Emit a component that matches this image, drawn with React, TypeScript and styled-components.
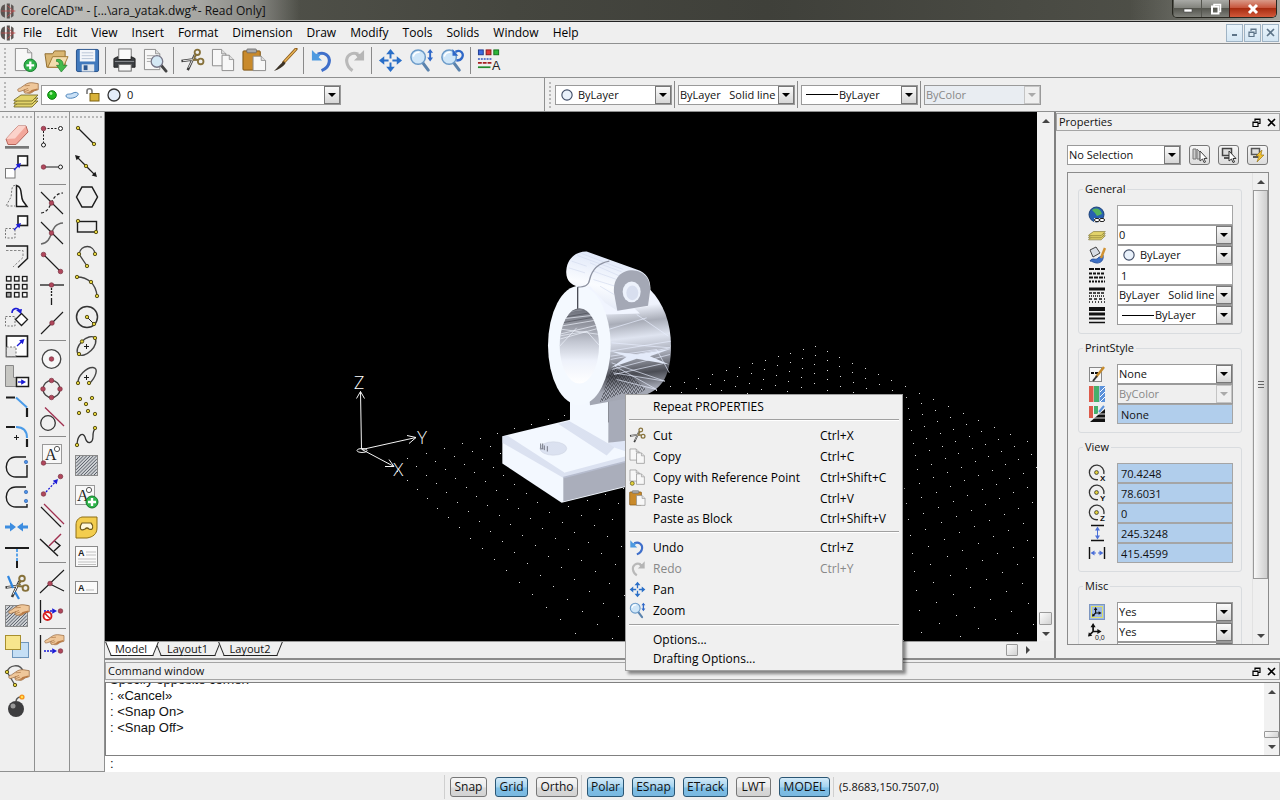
import React from "react";
import styled, { createGlobalStyle, css } from "styled-components";

const uiFont = `"Open Sans", "Noto Sans", sans-serif`;
const ink = "#111";
const face = "#efefef";
const edge = "#8f9090";

const Global = createGlobalStyle`
  *, *::before, *::after { box-sizing: border-box; }
  html, body { margin: 0; height: 100%; background: ${face}; }
  body { font: 11px/14px ${uiFont}; color: ${ink}; overflow: hidden; }
  button, select, input { font: inherit; color: inherit; margin: 0; padding: 0; }
`;

/* ---------- shell ---------- */
const Shell = styled.div`
  position: relative;
  display: flex;
  flex-direction: column;
  height: 100vh;
  min-height: 640px;
  background: ${face};
`;

const TitleBar = styled.header`
  display: flex;
  flex: none;
  align-items: center;
  gap: 5px;
  height: 22px;
  border-bottom: 1px solid #222;
  box-shadow: inset 0 -1px 0 #b8b8b4;
  background:
    linear-gradient(90deg, rgba(205, 205, 202, 0.95) 0, rgba(175, 175, 171, 0.9) 200px, rgba(150, 150, 146, 0.8) 255px, transparent 300px),
    linear-gradient(270deg, #a3a59e 0, #777871 60px, transparent 150px),
    linear-gradient(90deg, #5a5b53, #45463f 40%, #3f403a 60%, #53544c);
`;

const WindowTitle = styled.h1`
  flex: 1;
  margin: 0;
  font-size: 12px;
  line-height: 18px;
  font-weight: 400;
`;

const WindowButtons = styled.div`
  display: flex;
  align-self: flex-start;
  height: 18px;
  margin-right: 3px;
  border: 1px solid #26261f;
  border-top: 0;
  border-radius: 0 0 5px 5px;
  overflow: hidden;
`;

const WindowButton = styled.button<{ $close?: boolean }>`
  display: grid;
  place-items: center;
  width: ${(p) => (p.$close ? 47 : 28)}px;
  border: 0;
  border-left: 1px solid ${(p) => (p.$close ? "#4a1a14" : "#55564f")};
  background: ${(p) =>
    p.$close
      ? "linear-gradient(#d99a88, #c8563d 45%, #a82c10 50%, #d2593a)"
      : "linear-gradient(#a9aaa6, #83847e 45%, #55564f 50%, #7f807a)"};
`;

const MenuBar = styled.nav`
  display: flex;
  flex: none;
  align-items: center;
  height: 22px;
  border-bottom: 1px solid ${edge};
  background: ${face};
`;

const MenuLink = styled.a`
  padding: 0 7px;
  color: #000;
  font-size: 12px;
  line-height: 18px;
  text-decoration: none;
`;

const MdiButtons = styled.div`
  display: flex;
  gap: 1px;
  margin-left: auto;
  margin-right: 1px;
`;

const MdiButton = styled.button`
  display: grid;
  place-items: center;
  width: 17px;
  height: 18px;
  border: 1px solid #9fb3c4;
  background: linear-gradient(#eaf4fb, #d4e6f3);
`;

const Toolbar = styled.div`
  display: flex;
  flex: none;
  align-items: center;
  height: 34px;
  border-bottom: 1px solid ${edge};
`;

const Grip = styled.span<{ $across?: boolean }>`
  flex: none;
  background: radial-gradient(circle, #b9b9b9 1px, transparent 1px) 0 0 / 4px 4px;
  ${(p) =>
    p.$across
      ? css`
          width: 32px;
          height: 4px;
          margin: 3px 1px;
        `
      : css`
          width: 4px;
          height: 28px;
          margin: 0 3px;
        `}
`;

const ToolButton = styled.button`
  display: grid;
  place-items: center;
  flex: none;
  width: 31px;
  height: 30px;
  border: 0;
  background: none;
`;

const Rule = styled.span`
  flex: none;
  width: 1px;
  height: 27px;
  margin: 0 3px 0 2px;
  background: #8a8a8a;
`;

const LayerSide = styled.div`
  display: flex;
  flex: 0 0 545px;
  align-items: center;
  height: 33px;
  border-right: 1px solid ${edge};
`;

/* ---------- combo box ---------- */
const ComboBox = styled.label<{ $width?: number; $off?: boolean; $tint?: string }>`
  position: relative;
  display: flex;
  align-items: center;
  gap: 5px;
  flex: ${(p) => (p.$width ? `0 0 ${p.$width}px` : "1 1 0")};
  min-width: 0;
  height: 20px;
  padding-left: 1px;
  border: 1px solid #9a9a9a;
  background: ${(p) => (p.$off ? p.$tint || "#efefef" : "#fff")};
  color: ${(p) => (p.$off ? "#888" : ink)};
`;

const ComboSelect = styled.select`
  appearance: none;
  flex: 1 1 0;
  min-width: 0;
  height: 18px;
  border: 0;
  background: transparent;
  opacity: 1;
  white-space: pre;
`;

const ComboArrow = styled.span<{ $off?: boolean }>`
  position: absolute;
  top: 0;
  right: 0;
  display: grid;
  place-items: center;
  width: 16px;
  height: 18px;
  border: 1px solid ${(p) => (p.$off ? "#c4c4c4" : "#777")};
  background: ${(p) => (p.$off ? "#efefef" : "linear-gradient(#fafafa, #d6d6d6)")};
  pointer-events: none;

  &::after {
    content: "";
    border: 4px solid transparent;
    border-top: 4px solid ${(p) => (p.$off ? "#aaa" : "#000")};
    border-bottom: 0;
  }
`;

const Stroke = styled.span`
  flex: none;
  width: 32px;
  height: 1px;
  margin: 0 -4px 0 3px;
  background: #000;
`;

const RingBox = styled.span`
  display: flex;
  flex: none;
  margin-left: 4px;
`;

type ComboProps = {
  name: string;
  value: string;
  width?: number;
  off?: boolean;
  tint?: string;
  lead?: React.ReactNode;
};

const Combo = ({ name, value, width, off, tint, lead }: ComboProps) => (
  <ComboBox $width={width} $off={off} $tint={tint}>
    {lead}
    <ComboSelect aria-label={name} disabled={off}>
      <option>{value}</option>
    </ComboSelect>
    <ComboArrow $off={off} />
  </ComboBox>
);

/* ---------- work area ---------- */
const Work = styled.main`
  display: flex;
  flex: 1 1 0;
  min-height: 0;
`;

const Palette = styled.div`
  display: flex;
  flex: 0 0 35px;
  flex-direction: column;
  align-items: center;
  border-right: 1px solid ${edge};
  border-bottom: 1px solid ${edge};
`;

const PaletteButton = styled.button`
  display: grid;
  place-items: center;
  flex: none;
  width: 34px;
  height: 30px;
  border: 0;
  background: none;
`;

const PaletteRule = styled.span`
  flex: none;
  width: 27px;
  height: 1px;
  margin: 2px 0 3px;
  background: #8a8a8a;
`;

const Desk = styled.div`
  display: flex;
  flex: 1 1 0;
  flex-direction: column;
  min-width: 0;
`;

const DeskTop = styled.div`
  display: flex;
  flex: 1 1 0;
  min-height: 0;
`;

const Drawing = styled.section`
  display: grid;
  flex: 1 1 0;
  grid-template: 1fr 17px / 1fr 17px;
  min-width: 0;
  border-right: 2px solid #808080;
`;

const Canvas = styled.div`
  min-height: 0;
  overflow: hidden;
  background: #000;

  svg { display: block; width: 100%; height: 100%; }
`;

const ScrollTrack = styled.div`
  display: flex;
  flex-direction: column;
  align-items: center;
  justify-content: space-between;
  padding: 7px 0 5px;
  background: #f1f1f1;
`;

const TrackEnd = styled.div`
  display: flex;
  flex-direction: column;
  align-items: center;
  gap: 7px;
`;

const Arrow = styled.span<{ $to: "up" | "down" | "right" }>`
  width: 0;
  height: 0;
  border: 4px solid transparent;
  ${(p) => p.$to === "up" && css`border-top: 0; border-bottom: 4px solid #444;`}
  ${(p) => p.$to === "down" && css`border-bottom: 0; border-top: 4px solid #444;`}
  ${(p) => p.$to === "right" && css`border-right: 0; border-left: 4px solid #444;`}
`;

const Thumb = styled.span<{ $w: number; $h: number }>`
  width: ${(p) => p.$w}px;
  height: ${(p) => p.$h}px;
  border: 1px solid #999;
  border-radius: 1px;
  background: linear-gradient(135deg, #fbfbfb, #d2d2d2);
`;

const SheetBar = styled.div`
  display: flex;
  align-items: center;
  padding-left: 1px;
  border-top: 1px solid #999;
`;

const SheetTab = styled.button<{ $width: number; $on?: boolean }>`
  position: relative;
  z-index: ${(p) => (p.$on ? 1 : 0)};
  width: ${(p) => p.$width}px;
  height: 14px;
  margin-bottom: 2px;
  border: 0;
  background: none;
  line-height: 14px;

  &::before, &::after {
    content: "";
    position: absolute;
    z-index: -1;
    top: 0;
    bottom: 0;
    width: 51%;
    border-bottom: 1px solid #222;
    background: ${(p) => (p.$on ? "#fff" : face)};
  }
  &::before { left: 2px; border-left: 1px solid #222; transform: skewX(22deg); }
  &::after { right: 1px; border-right: 1px solid #222; transform: skewX(-22deg); }
`;

const SheetScroll = styled.div`
  display: flex;
  align-items: center;
  gap: 8px;
  margin-left: auto;
  padding-right: 7px;
`;

/* ---------- docked panels ---------- */
const PanelHead = styled.div`
  display: flex;
  flex: none;
  align-items: center;
  gap: 6px;
  height: 18px;
  padding: 0 3px 0 2px;
  border: 1px solid #a5a5a5;
`;

const PanelTitle = styled.h2`
  flex: 1;
  margin: 0;
  font-size: 11px;
  line-height: 14px;
  font-weight: 400;
`;

const PanelButton = styled.button`
  display: grid;
  place-items: center;
  width: 9px;
  height: 10px;
  border: 0;
  background: none;
`;

const Properties = styled.aside`
  display: flex;
  flex: 0 0 224px;
  flex-direction: column;
  padding-top: 1px;
`;

const SelectionRow = styled.div`
  display: flex;
  flex: none;
  align-items: center;
  gap: 8px;
  padding: 14px 12px 7px 11px;
`;

const SelectionButton = styled.button`
  display: grid;
  place-items: center;
  flex: none;
  width: 21px;
  height: 20px;
  border: 1px solid #777;
  border-radius: 3px;
  background: linear-gradient(#f6f6f6, #dcdcdc);
`;

const PropsFrame = styled.div`
  display: flex;
  flex: 1 1 0;
  min-height: 0;
  margin: 0 11px 13px;
  border: 1px solid #8b8b8b;
  overflow: hidden;
`;

const PropsList = styled.div`
  display: flex;
  flex: 1;
  flex-direction: column;
  gap: 7px;
  min-width: 0;
  padding: 9px 10px 0;
  overflow: hidden;
`;

const Group = styled.fieldset`
  flex: none;
  min-width: 0;
  margin: 0;
  padding: 9px 8px 8px 4px;
  border: 1px solid #d9dcdf;
  border-radius: 3px;
`;

const GroupName = styled.legend`
  height: 14px;
  padding: 0 2px;
  line-height: 14px;
`;

const PropRow = styled.div`
  display: grid;
  grid-template-columns: 34px 1fr;
  align-items: center;
  height: 20px;

  > svg { margin-left: 5px; }
`;

const PropInput = styled.input<{ $blue?: boolean }>`
  width: 100%;
  height: 20px;
  padding: 0 3px;
  border: 1px solid #a5a5a5;
  background: ${(p) => (p.$blue ? "#b1ceec" : "#fff")};
`;

const PropsTrack = styled.div`
  display: flex;
  flex: 0 0 16px;
  flex-direction: column;
  align-items: center;
  gap: 6px;
  padding: 7px 0 6px;
  border-left: 1px solid #e2e2e2;
`;

const LongThumb = styled.span`
  display: grid;
  flex: 0 1 389px;
  place-items: center;
  width: 15px;
  margin-bottom: auto;
  border: 1px solid #999;
  background: linear-gradient(90deg, #f8f8f8, #e2e2e2 50%, #cfcfcf);
`;

const ThumbGrip = styled.span`
  width: 6px;
  height: 8px;
  background: repeating-linear-gradient(#666 0 1px, transparent 1px 3px);
`;

const CommandPanel = styled.section`
  display: flex;
  flex: none;
  flex-direction: column;
  height: 114px;
  padding-top: 2px;
  border-top: 2px solid #8b8b8b;
`;

const History = styled.div`
  display: flex;
  flex: 1;
  min-height: 0;
  margin-top: 2px;
  border: 1px solid #808080;
  background: #fff;
`;

const HistoryText = styled.div`
  display: flex;
  flex: 1;
  flex-direction: column;
  justify-content: flex-end;
  padding: 0 4px 19px;
  overflow: hidden;
  font: 13px/16px "Liberation Sans", Arial, sans-serif;
`;

const HistoryTrack = styled(ScrollTrack)`
  width: 15px;
  padding: 7px 0 6px;
`;

const CommandInput = styled.input`
  flex: none;
  width: 100%;
  height: 16px;
  padding: 0 5px;
  border: 0;
  background: #fff;
  font: 13px/16px "Liberation Sans", Arial, sans-serif;
`;

const StatusBar = styled.footer`
  display: flex;
  flex: none;
  align-items: center;
  height: 28px;
  padding: 2px 0 0 444px;
  font-size: 12px;
`;

const StatusGroup = styled.div`
  display: flex;
  gap: 8px;
  padding: 2px 3px 2px 5px;
  border-left: 1px solid #cfcfcf;
`;

const StatusToggle = styled.button<{ $on?: boolean; $width: number }>`
  width: ${(p) => p.$width}px;
  height: 20px;
  border: 1px solid ${(p) => (p.$on ? "#2a5674" : "#777")};
  border-radius: 3px;
  background: ${(p) =>
    p.$on
      ? "linear-gradient(#d3eaf8, #a4d3ef 50%, #7fbfe6 55%, #79b8e0)"
      : "linear-gradient(#f6f6f6, #ebebeb 50%, #dadada 55%, #d2d2d2)"};
  line-height: 18px;
`;

const Coordinates = styled.output`
  padding: 3px 5px;
  border-left: 1px solid #cfcfcf;
  font-size: 11px;
`;

/* ---------- context menu ---------- */
const ContextMenu = styled.ul`
  position: absolute;
  z-index: 5;
  top: 394px;
  left: 625px;
  width: 278px;
  margin: 0;
  padding: 2px;
  border: 1px solid #a0a0a0;
  background: #f0f0f0;
  box-shadow: 3px 3px 3px rgba(0, 0, 0, 0.45);
  list-style: none;
  font-size: 12px;
`;

const ContextItem = styled.button<{ $off?: boolean; $short?: boolean }>`
  display: grid;
  grid-template-columns: 25px 167px 1fr;
  align-items: center;
  width: 100%;
  height: ${(p) => (p.$short ? 19 : 21)}px;
  border: 0;
  background: none;
  color: ${(p) => (p.$off ? "#888" : "#000")};
  text-align: left;
  white-space: nowrap;

  svg { display: block; margin-left: 1px; }
`;

const ContextRule = styled.li`
  height: 1px;
  margin: 3px 1px 5px;
  background: #a0a0a0;
  box-shadow: 0 1px 0 #fff;
`;

/* ---------- icons ---------- */
const Icon = ({ s = 26, v = 26, children }: { s?: number; v?: number; children: React.ReactNode }) => (
  <svg width={s} height={s} viewBox={`0 0 ${v} ${v}`} fill="none" stroke="none" aria-hidden="true">
    {children}
  </svg>
);

const K = "#1c1c1c";
const B = "#1b1bd6";

const Node = ({ x, y }: { x: number; y: number }) => <circle cx={x} cy={y} r="1.7" fill="#e3d23c" stroke="#4d4510" strokeWidth=".9" />;
const Pin = ({ x, y }: { x: number; y: number }) => <circle cx={x} cy={y} r="2.3" fill="#b0475c" stroke="#6f2636" strokeWidth=".6" />;
const Dot = ({ x, y }: { x: number; y: number }) => <circle cx={x} cy={y} r="1.7" fill="#4a90e8" stroke="#1a4f9c" strokeWidth=".5" />;
const Hand = () => (
  <>
    <path
      d="M1 10 C.3 8.500 2 7.500 4 7 L9 3.500 C12 1 16 .500 19 1 L25 2 V9 L20 10.500 C17 13.500 14 14 12 13 C10 13.500 8 13 8.500 11.500 C7.500 11 8 9.500 9.500 9 L4 11 C2 11.500 1.300 11 1 10Z"
      fill="#efc79a"
      stroke="#8f5f34"
      strokeWidth=".8"
    />
    <path d="M9.500 9 L13 7.500 M8.500 11.500 L14 9.500 M12 13 L16 11 M9 4.500 L15 4" stroke="#a8713f" strokeWidth=".8" />
    <path d="M17 9.500 L24 7.500 V9 L20 10.500 C18 12 16 13 14 13Z" fill="#b97a45" />
  </>
);
const Page = ({ x = 0, y = 0, w = 15, h = 18 }: { x?: number; y?: number; w?: number; h?: number }) => (
  <g transform={`translate(${x} ${y})`}>
    <path d={`M.5 .5 H${w - 5} L${w - 0.5} 5 V${h - 0.5} H.5Z`} fill="#f7f7f7" stroke="#8b8b8b" />
    <path d={`M${w - 5} .5 V5 H${w - 0.5}`} fill="#dcdcdc" stroke="#8b8b8b" strokeWidth=".8" />
  </g>
);
const Loupe = () => (
  <>
    <path d="M14 15 L20 23" stroke="#5b83ad" strokeWidth="3.2" strokeLinecap="round" />
    <circle cx="9.5" cy="9.5" r="7.5" fill="#cfe6f8" stroke="#6a9ac8" strokeWidth="1.6" />
    <path d="M4.500 9 A5.500 5.500 0 0 1 11 4.500" stroke="#fff" strokeWidth="1.600" />
  </>
);
const ArrowLine = ({ x1, y1, x2, y2, c = B, dash }: { x1: number; y1: number; x2: number; y2: number; c?: string; dash?: string }) => {
  const a = Math.atan2(y2 - y1, x2 - x1);
  const p = (t: number, r: number) => `${x2 - r * Math.cos(a + t)},${y2 - r * Math.sin(a + t)}`;
  return (
    <>
      <line x1={x1} y1={y1} x2={x2 - 3 * Math.cos(a)} y2={y2 - 3 * Math.sin(a)} stroke={c} strokeWidth="1.300" strokeDasharray={dash} />
      <polygon points={`${x2},${y2} ${p(0.5, 5.5)} ${p(-0.5, 5.5)}`} fill={c} />
    </>
  );
};
const Scissors = () => (
  <>
    <path d="M1.500 13.500 L17 11.500 M8 23 L15.500 7" stroke="#3a3a3a" strokeWidth="2.600" />
    <path d="M3 13.300 L17 11.500 M9 20.500 L15.500 7.500" stroke="#efefef" strokeWidth="1" />
    <circle cx="18" cy="4.500" r="2.800" stroke="#86713a" strokeWidth="1.900" />
    <circle cx="21.500" cy="14" r="2.900" stroke="#86713a" strokeWidth="1.900" />
    <path d="M13 12 L19 12.500 M14.500 10.500 L17 7" stroke="#86713a" strokeWidth="1.900" />
  </>
);
const Hatch = ({ h = 24 }: { h?: number }) => (
  <>
    <rect x="1.500" y="1.500" width="22" height={h - 3} fill="#cdd0d3" stroke="#8a8a8a" />
    <path
      d={Array.from({ length: 13 }, (_, i) => {
        const k = 4 + i * 3.3;
        const x1 = 2 + Math.max(0, k - (h - 4));
        const y1 = Math.min(h - 2, 2 + k);
        const x2 = Math.min(23, 2 + k);
        const y2 = 2 + Math.max(0, k - 21);
        return x1 < 23 && y2 < h - 2 ? `M${x1} ${y1} L${x2} ${y2}` : "";
      }).join("")}
      stroke="#555b66"
      strokeWidth="1"
    />
  </>
);
const Letter = ({ x, y, size, children, bold }: { x: number; y: number; size: number; children: string; bold?: boolean }) => (
  <text x={x} y={y} fontSize={size} fontWeight={bold ? 700 : 400} fontFamily={bold ? '"Liberation Sans"' : '"Liberation Serif"'} fill="#222">
    {children}
  </text>
);
const Plus = ({ x, y, r = 6.500 }: { x: number; y: number; r?: number }) => (
  <>
    <circle cx={x} cy={y} r={r} fill="#2fb34a" stroke="#137a2a" />
    <path d={`M${x - 4} ${y} h8 M${x} ${y - 4} v8`} stroke="#fff" strokeWidth="2.400" />
  </>
);

const CopyArt = () => (
  <>
    <Page x={1} y={1} />
    <Page x={11} y={7} w={13} h={17} />
  </>
);
const PasteArt = () => (
  <>
    <rect x="1" y="3" width="18" height="20" rx="1" fill="#c98a2b" stroke="#7d5210" />
    <rect x="5" y="1" width="10" height="4" rx="1" fill="#a9a9a9" stroke="#666" strokeWidth=".8" />
    <Page x={11} y={8} w={14} h={16} />
  </>
);
const UndoArt = () => (
  <>
    <path d="M8 6.500 C15 3.500 21 8 20 14.500 C19.500 18 17 21.500 12 23.500" stroke="#3f6fca" strokeWidth="3.200" />
    <path d="M2 2 V13 H12.500 L9 9.500 L11.500 6.500 L6 6Z" fill="#4e9ae0" />
  </>
);
const RedoArt = () => (
  <>
    <path d="M18 6.500 C11 3.500 5 8 6 14.500 C6.500 18 9 21.500 12 23.500" stroke="#b9b9b9" strokeWidth="3.200" />
    <path d="M24 2 V13 H13.500 L17 9.500 L14.500 6.500 L20 6Z" fill="#b5b5b5" />
  </>
);
const PanArt = () => (
  <>
    <path d="M13 1 L17.500 6.500 H8.500Z M13 25 L17.500 19.500 H8.500Z M1 13 L6.500 8.500 V17.500Z M25 13 L19.500 8.500 V17.500Z" fill="#2a6fc8" />
    <path d="M12 6 h2 v5 h-2z M12 15 h2 v5 h-2z M6 12 h5 v2 h-5z M15 12 h5 v2 h-5z" fill="#2a6fc8" />
  </>
);
const ZoomArt = () => (
  <>
    <Loupe />
    <path d="M22 1 L25 5 H23 V10 H25 L22 14 L19 10 H21 V5 H19Z" fill="#2f68c8" />
  </>
);

const Logo = () => (
  <Icon s={16}>
    <path d="M4 4 C0 8 0 18 4 22 L8 24 V2Z M11 1 V25 L16 25 V1Z M18 2 L22 5 V21 L18 24Z" fill="#5b5552" />
    <path d="M12 4 L22 13 L12 22 M2 13 H25" stroke="#c24a4a" strokeWidth="1.300" />
  </Icon>
);

const standard: (null | [string, React.ReactNode])[] = [
  ["New", <><Page x={2} w={18} h={24} /><Plus x={18} y={18} /></>],
  ["Open", <><path d="M1 6 H9 L11 3 H22 V20 H3Z" fill="#d9b673" stroke="#8e6a2c" /><path d="M4 20 L9 9 H25 L20 20Z" fill="#f3dcae" stroke="#a17a35" /><path d="M13 12 C18 11 20 14 20 18 H24 L18 25 L13 18 H16 C16 15 15 14 13 14Z" fill="#43ba4c" stroke="#1f7d2c" strokeWidth=".7" /></>],
  ["Save", <><rect x="1.500" y="1.500" width="23" height="23" rx="1.500" fill="#4079bd" stroke="#24508a" /><rect x="5" y="2" width="16" height="12" fill="#f3f6fa" /><path d="M7 5 H19 M7 8 H19 M7 11 H19" stroke="#b9c6d6" /><rect x="7" y="17" width="13" height="7.500" fill="#dfe5ec" /><rect x="9" y="18" width="4" height="5" fill="#2b568f" /></>],
  null,
  ["Print", <><rect x="7" y="1" width="13" height="11" fill="#fafafa" stroke="#777" /><path d="M2 11 L6 9 V12 H20 V9 L24 11 V20 H2Z" fill="#3b3e42" stroke="#222" /><rect x="7" y="17" width="13" height="7" fill="#f6f6f6" stroke="#666" /><path d="M3 14 H23" stroke="#8b8f94" /></>],
  ["Print Preview", <><Page x={1} y={1} w={17} h={22} /><path d="M4 8 H12 M4 11 H9 M4 14 H8" stroke="#aaa" /><path d="M19 18 L24 24" stroke="#444" strokeWidth="3" strokeLinecap="round" /><circle cx="14.500" cy="14" r="6" fill="#d4e8f5" stroke="#778" strokeWidth="1.400" /></>],
  null,
  ["Cut", <Scissors />],
  ["Copy", <CopyArt />],
  ["Paste", <PasteArt />],
  ["Property Painter", <><path d="M24 1 L11 15" stroke="#8a5a1c" strokeWidth="3.200" strokeLinecap="round" /><path d="M24 1 L12 14" stroke="#eab657" strokeWidth="1.400" /><path d="M11 14 L13 16 C10 20 6 22 1 24 C5 20 7 17 11 14Z" fill="#3c3327" /></>],
  null,
  ["Undo", <UndoArt />],
  ["Redo", <RedoArt />],
  null,
  ["Pan", <PanArt />],
  ["Zoom", <ZoomArt />],
  ["Zoom Previous", <><Loupe /><path d="M16 4 C22 1 25 6 23 10 C22 12 20 13 17 13" stroke="#2f68c8" strokeWidth="2.400" /><path d="M13 1 V8 H19Z" fill="#2f68c8" /></>],
  null,
  ["Properties", <><rect x="1.500" y="2" width="5" height="5" fill="#3d6be0" stroke="#203c90" /><rect x="9.500" y="2" width="5" height="5" fill="#e23a3a" stroke="#8a1717" /><rect x="17.500" y="2" width="5" height="5" fill="#2eb63a" stroke="#14701c" /><path d="M1 11.500 H16" stroke="#3355c0" strokeWidth="1.500" strokeDasharray="2 1" /><path d="M1 15.500 H15" stroke="#a51f1f" strokeWidth="2" strokeDasharray="4 1" /><path d="M1 20 H14" stroke="#218a2c" strokeWidth="1.800" /><text x="15.500" y="23" fontSize="13" fontFamily='"Liberation Sans"' fill="#222">A</text></>],
];

const modify: [string, React.ReactNode][] = [
  ["Delete", <><rect x="1" y="22" width="24" height="2.700" fill="#777" /><path d="M2 15 L14 2 H22 L24 8 L12 20.500 H4Z" fill="#f2a79b" stroke="#b5645a" /><path d="M2 15 L14 2 H22 L11 14.500Z" fill="#fbd2ca" /></>],
  ["Copy Entities", <><rect x="1.500" y="14.500" width="9.500" height="9.500" fill="#fff" stroke="#777" /><rect x="14" y="2" width="9.500" height="9.500" fill="#fff" stroke={K} strokeWidth="1.600" /><ArrowLine x1={10} y1={16} x2={17} y2={9} /></>],
  ["Mirror", <><path d="M11 1.500 C7 1 8 8 7 13 L2 22 H11" stroke="#777" strokeDasharray="2 1.500" /><path d="M12.500 1.500 C19 3 16 12 19 17 L23 22.500 H12.500Z" fill="#fff" stroke={K} strokeWidth="1.500" /></>],
  ["Move", <><rect x="1.500" y="14.500" width="9.500" height="9.500" stroke="#777" strokeDasharray="2 1.500" /><rect x="14" y="2" width="9.500" height="9.500" fill="#fff" stroke={K} strokeWidth="1.600" /><ArrowLine x1={10} y1={16} x2={17} y2={9} /></>],
  ["Offset", <><path d="M2 2 H23.500 V14.500 L14 23.500" stroke={K} strokeWidth="1.500" /><path d="M2 6.500 H19 V13.500 L9 23" stroke="#888" strokeDasharray="2.500 1.500" /></>],
  ["Pattern", <>{[2.5, 10.5, 18.5].map((y, j) => [2.5, 10.5, 18.5].map((x, i) => <rect key={`${i}${j}`} x={x} y={y} width="4.500" height="4.500" fill={i === 0 && j === 2 ? "#aaa" : "#fff"} stroke={K} strokeWidth="1.300" />))}</>],
  ["Rotate", <><rect x="1.500" y="12.500" width="9.500" height="9.500" stroke="#777" strokeDasharray="2 1.500" /><path d="M17.500 9.500 L23.500 15.500 L17.500 21.500 L11.500 15.500Z" fill="#fff" stroke={K} strokeWidth="1.300" /><path d="M8 9 C8 4 14 3 15.500 7" stroke={B} strokeWidth="1.600" /><path d="M12 6 L18 5 L17 10Z" fill={B} /></>],
  ["Scale", <><rect x="2.500" y="2" width="21" height="20.500" fill="#fff" stroke={K} strokeWidth="1.600" /><rect x="2.500" y="13" width="9.500" height="9.500" fill="#e6e6e6" stroke="#777" strokeDasharray="2 1.500" /><ArrowLine x1={13} y1={12} x2={20.500} y2={5} /></>],
  ["Stretch", <><path d="M1.500 1.500 H9.500 V13.500 H12.500 V22.500 H1.500Z" fill="#c6c6c2" stroke="#888" /><rect x="12.500" y="13.500" width="12" height="9" fill="#fff" stroke={K} strokeWidth="1.500" /><ArrowLine x1={14} y1={18} x2={22} y2={18} /></>],
  ["Chamfer", <><path d="M2 3.500 H11 M23 14 V23" stroke={K} strokeWidth="2.200" /><path d="M12 3.500 L23 13.500" stroke="#4a9be8" strokeWidth="2" /></>],
  ["Fillet", <><path d="M2 3 H11 M23 15 V23" stroke={K} strokeWidth="2.200" /><path d="M12 3 C19 3 23 7 23 14" stroke="#4a9be8" strokeWidth="2" /><path d="M10 13.500 H15 M12.500 11 V16" stroke={K} /></>],
  ["Split at Point", <><path d="M22 3 H12 C-1 3 -1 23 12 23 H23 V11" stroke={K} strokeWidth="1.400" /><Dot x={22} y={8} /></>],
  ["Split", <><path d="M22 3 H12 C-1 3 -1 23 12 23 H23 V20" stroke={K} strokeWidth="1.400" /><Dot x={22} y={8} /><Dot x={22} y={17} /></>],
  ["Weld", <><path d="M1 11.500 H6 V8.500 L12 13 L6 17.500 V14.500 H1Z M24 11.500 H19 V8.500 L13 13 L19 17.500 V14.500 H24Z" fill="#3d8de0" /></>],
  ["Trim", <><path d="M1 4 H25 M13 17 V24" stroke={K} strokeWidth="2" /><path d="M13 5 V17" stroke="#4a9be8" strokeWidth="1.800" strokeDasharray="3 1.500" /></>],
  ["Power Trim", <><Scissors /><path d="M4 2 L9 14 M11 18 L15 25" stroke="#2f86e0" strokeWidth="2.200" /></>],
  ["Edit Hatch", <><Hatch /><g transform="translate(4 0) scale(.85)"><Hand /></g></>],
  ["Display Order", <><rect x="8.500" y="8.500" width="16" height="15" fill="#c5dff5" stroke="#6d95bb" /><rect x="1.500" y="1.500" width="15" height="14" fill="#f7e58c" stroke="#a88f2e" /></>],
  ["Edit Polyline", <><path d="M3 8 C5 1 16 -1 19 7 M3 8 L11 21" stroke="#555" strokeWidth="1.400" /><g transform="translate(4 5) scale(.85)"><Hand /></g><Node x={3} y={8} /><Node x={11} y={21} /></>],
  ["Explode", <><circle cx="12" cy="15" r="8" fill="#3d3d3f" /><circle cx="9" cy="12" r="2.500" fill="#999" /><path d="M12 7 C13 3 15 3 17 3" stroke="#555" strokeWidth="1.500" /><circle cx="18" cy="3" r="2.600" fill="#f7931e" /><circle cx="18" cy="3" r="1.200" fill="#ffe14d" /></>],
];

const snaps: (null | [string, React.ReactNode])[] = [
  ["Track Point", <><path d="M5 4.500 H19 M4.500 7 V19" stroke={K} strokeDasharray="2 1.500" /><Pin x={4.5} y={4.5} /><circle cx="21.500" cy="4.500" r="2" fill="#fff" stroke={K} /><circle cx="4.500" cy="21" r="2" fill="#fff" stroke={K} /></>],
  ["Snap From", <><path d="M5 13 H19" stroke={K} /><Pin x={4.5} y={13} /><circle cx="21.500" cy="13" r="2" fill="#fff" stroke={K} /></>],
  null,
  ["Visual Intersection", <><path d="M2 2 L24 24" stroke={K} strokeWidth="1.100" /><path d="M2 23 C14 22 10 4 24 3" stroke={K} strokeWidth="1.200" strokeDasharray="3 2" /><Pin x={12.5} y={13} /></>],
  ["Intersection", <><path d="M2 2 L24 24" stroke={K} strokeWidth="1.100" /><path d="M2 24 C16 22 9 4 24 3" stroke="#666" strokeWidth="1.500" /><Pin x={12.5} y={13} /></>],
  ["Endpoint", <><path d="M5 5 L22 22" stroke={K} strokeWidth="1.100" /><Pin x={4.5} y={4.5} /><Pin x={21.5} y={21.5} /></>],
  ["Perpendicular Point", <><path d="M1 5 H25" stroke={K} strokeWidth="1.300" /><path d="M12.500 8 V17" stroke={K} strokeWidth="1.300" strokeDasharray="2 1" /><path d="M12.500 18 V25" stroke={K} strokeWidth="1.300" /><Pin x={12.5} y={5} /></>],
  ["Midpoint", <><path d="M2 24 L24 2" stroke={K} strokeWidth="1.100" /><Pin x={13} y={13} /></>],
  null,
  ["Center", <><circle cx="12.500" cy="13" r="9.300" fill="#f7f7f7" stroke="#444" strokeWidth="1.300" /><Pin x={12.5} y={13} /></>],
  ["Quadrant", <><circle cx="12.500" cy="13" r="8.500" stroke="#444" strokeWidth="1.300" /><Pin x={12.5} y={4.5} /><Pin x={21} y={13} /><Pin x={12.5} y={21.5} /><Pin x={4} y={13} /></>],
  ["Tangent", <><circle cx="9" cy="17" r="7.300" stroke="#333" strokeWidth="1.300" /><path d="M6 1.500 L25 20" stroke="#a03050" strokeWidth="1.300" /></>],
  null,
  ["Insertion Point", <><rect x="3.500" y="2.500" width="19" height="19" fill="#f8f8f8" stroke="#999" /><Letter x={6} y={18} size={16}>A</Letter><circle cx="18" cy="7" r="2.600" fill="#fff" stroke="#555" /><Pin x={4.5} y={21} /></>],
  ["Extension", <><ArrowLine x1={7} y1={20} x2={19} y2={7} dash="2 1.500" /><Pin x={4.5} y={22} /><Pin x={21.5} y={4.5} /></>],
  ["Parallel", <><path d="M2 5 L22 25" stroke={K} strokeWidth="1.200" /><path d="M5 2 L25 22" stroke="#a03050" strokeWidth="1.300" /></>],
  ["Perpendicular", <><path d="M1 7 L19 24 M15 19 L21 13.500 L15.500 9" stroke={K} strokeWidth="1.400" /><path d="M10 14 L22 2" stroke="#a03050" strokeWidth="1.400" /></>],
  null,
  ["Nearest", <><path d="M1 25 L25 2 M11 16 L25 23" stroke={K} strokeWidth="1.100" /><Pin x={11} y={15.5} /></>],
  ["No Snap", <><path d="M1.500 2 V25" stroke={K} strokeWidth="1.300" /><ArrowLine x1={5} y1={13} x2={18} y2={13} dash="2 1" /><Pin x={21.5} y={13} /><circle cx="8.500" cy="18" r="4" fill="#fff" stroke="#d81e1e" strokeWidth="1.800" /><path d="M6 15.500 L11 20.500" stroke="#d81e1e" strokeWidth="1.600" /></>],
  null,
  ["Snap Settings", <><path d="M1.500 1 V25" stroke={K} strokeWidth="1.300" /><g transform="translate(5 0) scale(.8)"><Hand /></g><ArrowLine x1={5} y1={17} x2={18} y2={17} dash="2 1" /><Pin x={21.5} y={17} /></>],
];

const draw: [string, React.ReactNode][] = [
  ["Line", <><path d="M4 4 L20 20" stroke={K} strokeWidth="1.200" /><Node x={4} y={4} /><Node x={20} y={20} /></>],
  ["Infinite Line", <><ArrowLine x1={12} y1={12} x2={23} y2={23} c={K} /><ArrowLine x1={12} y1={12} x2={1} y2={1} c={K} /><Node x={12} y={12} /></>],
  ["Polygon", <path d="M2.500 13 L8 3 H18 L23.500 13 L18 23 H8Z" stroke={K} strokeWidth="1.500" />],
  ["Rectangle", <><rect x="3.500" y="7.500" width="19" height="10.500" stroke={K} strokeWidth="1.400" /><Node x={4} y={7} /><Node x={22} y={18} /></>],
  ["Polyline", <><path d="M13 22 L5 10 C7 0 20 0 21 10" stroke="#444" strokeWidth="1.300" /><Node x={5} y={10} /><Node x={21} y={10} /><Node x={13} y={22} /></>],
  ["Arc", <><path d="M3 3 C14 3 22 10 23 22" stroke="#444" strokeWidth="1.300" /><Node x={3} y={3} /><Node x={17} y={8} /><Node x={23} y={22} /></>],
  ["Circle", <><circle cx="13" cy="13" r="10.500" stroke="#333" strokeWidth="1.500" /><path d="M13 13 L20 20" stroke={K} /><Node x={13} y={13} /><Node x={20} y={20} /></>],
  ["Ellipse", <><ellipse cx="12.500" cy="12" rx="11.500" ry="6.500" transform="rotate(-45 12.500 12)" stroke="#444" strokeWidth="1.400" /><path d="M10 12.500 H15 M12.500 10 V15" stroke={K} /><Node x={21} y={4} /><Node x={5} y={20} /><Node x={8} y={7.5} /></>],
  ["Elliptical Arc", <><path d="M4 20 C3 12 13 3 19 3.500 C25 4 22 13 15 20" stroke="#444" strokeWidth="1.400" /><path d="M10 13.500 H15 M12.500 11 V16" stroke={K} /><Node x={4} y={19} /><Node x={15} y={19} /></>],
  ["Point", <><Node x={6} y={5} /><Node x={18} y={4} /><Node x={12} y={10} /><Node x={5} y={19} /><Node x={14} y={17} /><Node x={21} y={20} /></>],
  ["Spline", <><path d="M3 20 C4 10 9 8 11 13 C13 21 19 20 19 12 C19 7 20 6 21 5" stroke="#333" strokeWidth="1.300" /><Node x={3} y={21} /><Node x={21} y={4} /></>],
  ["Hatch", <Hatch h={23} />],
  ["Note", <><rect x="1.500" y="1.500" width="19" height="19" fill="#f8f8f8" stroke="#999" /><Letter x={3} y={17} size={16}>A</Letter><circle cx="15" cy="6" r="2.600" fill="#fff" stroke="#555" /><Plus x={18} y={18} r={6} /></>],
  ["Region", <><path d="M8 3 H23 V14 C23 20 19 23 13 24 H2 V11 C2 7 4 4 8 3Z" fill="#f3cd4e" stroke="#8e6f14" /><path d="M8 9 H17 C20 12 19 17 15 15 C13 13 12 14 11 15 C6 18 5 13 8 9Z" fill="#fff8dc" stroke="#6f5a1c" strokeWidth="1.200" /></>],
  ["Text", <><rect x="1.500" y="2.500" width="22" height="20" fill="#fafafa" stroke="#8a8a8a" /><Letter x={4} y={12} size={9} bold>A</Letter><path d="M12 8 H22 M12 11 H22 M4 15 H22 M4 18 H22 M4 20.500 H22" stroke="#c0c0c0" /></>],
  ["Simple Note", <><rect x="1.500" y="7.500" width="22" height="12" fill="#fafafa" stroke="#8a8a8a" /><Letter x={4} y={17} size={9} bold>A</Letter><path d="M12 16 H20" stroke="#bbb" /></>],
];

const LayerRing = () => (
  <RingBox>
    <Icon s={12} v={14}>
      <circle cx="7" cy="7" r="6" fill="#e9f1fb" stroke="#3f4c66" strokeWidth="1.300" />
    </Icon>
  </RingBox>
);
const Layers = () => (
  <>
    {[0, 3, 6].map((d) => (
      <path key={d} d={`M1 ${19 - d} L8 ${14 - d} H25 L19 ${20 - d} H1Z`} fill="#e2d36a" stroke="#6d6220" strokeWidth=".8" />
    ))}
  </>
);
const AxisMark = ({ t }: { t: string }) => (
  <Icon s={18} v={18}>
    <path d="M10 15.600 A7.300 7.300 0 1 1 15.800 10" stroke="#333" strokeWidth="1.300" />
    <circle cx="8.500" cy="8.500" r="1.900" fill="#e3d23c" stroke="#333" strokeWidth=".8" />
    <text x="12" y="16.500" fontSize="8" fontWeight="700" fontFamily='"Liberation Sans"' fill="#111">{t}</text>
  </Icon>
);
const Ucs = ({ framed }: { framed?: boolean }) => (
  <Icon s={18} v={18}>
    {framed && <rect x="1.500" y="1.500" width="15" height="15" fill="#9db8e4" stroke="#7d96c0" />}
    {framed && <rect x="3.500" y="3.500" width="11" height="11" stroke="#dfe06a" />}
    <g transform={framed ? "translate(4 4) scale(.6)" : "translate(0 0) scale(.85)"}>
      <path d="M6 10 V3 M6 10 H13 M6 10 L2 14" stroke="#111" strokeWidth="2" />
      <path d="M6 0 L9 5 H3Z M16 10 L11 7 V13Z M0 16 L1 11 L5 15Z" fill="#111" />
    </g>
    {!framed && <text x="7" y="17" fontSize="7" fontFamily='"Liberation Sans"' fill="#111">0,0</text>}
  </Icon>
);
const RestoreGlyph = ({ c = "#000" }: { c?: string }) => (
  <Icon s={9} v={9}>
    <path d="M3 3 V1 H8 V5.500 H6.500 M3 1.500 H8 M1 4 H6 V8.500 H1Z M1 4.500 H6" stroke={c} strokeWidth="1.200" />
  </Icon>
);
const CloseGlyph = ({ c = "#000" }: { c?: string }) => (
  <Icon s={9} v={9}>
    <path d="M1 1 L8 8 M8 1 L1 8" stroke={c} strokeWidth="1.600" />
  </Icon>
);

/* ---------- model view ---------- */
// The ground grid is a square lattice seen in perspective.
const gridDots = (() => {
  const steps = 28;
  const [x0, y0, x1, y1, x2, y2, x3, y3] = [283, 351, 710, 234, 1185, 448, 695, 726];
  const dx1 = x1 - x2, dx2 = x3 - x2, sx = x0 - x1 + x2 - x3;
  const dy1 = y1 - y2, dy2 = y3 - y2, sy = y0 - y1 + y2 - y3;
  const det = dx1 * dy2 - dx2 * dy1;
  const g = (sx * dy2 - dx2 * sy) / det;
  const h = (dx1 * sy - sx * dy1) / det;
  let d = "";
  for (let i = 0; i <= steps; i++) {
    for (let j = 0; j <= steps; j++) {
      const u = i / steps, v = j / steps;
      const w = g * u + h * v + 1;
      const x = ((x1 - x0 + g * x1) * u + (x3 - x0 + h * x3) * v + x0) / w;
      const y = ((y1 - y0 + g * y1) * u + (y3 - y0 + h * y3) * v + y0) / w;
      d += `M${Math.round(x)} ${Math.round(y)}h1v1h-1z`;
    }
  }
  return d;
})();

const ModelView = () => (
  <svg viewBox="0 0 932 530" preserveAspectRatio="xMidYMid slice" role="img" aria-label="Bearing bracket model">
    <defs>
      <linearGradient id="band" x1="0" y1="0" x2="0.08" y2="1">
        <stop offset="0" stopColor="#f4f7ff" />
        <stop offset=".28" stopColor="#eef2fc" />
        <stop offset=".4" stopColor="#a9adb8" />
        <stop offset=".52" stopColor="#dfe4f0" />
        <stop offset=".64" stopColor="#b0b4c0" />
        <stop offset=".8" stopColor="#4a4c54" />
        <stop offset=".92" stopColor="#a3a7b3" />
      </linearGradient>
      <linearGradient id="bore" x1="0" y1="0" x2="0" y2="1">
        <stop offset="0" stopColor="#6b6e78" />
        <stop offset=".2" stopColor="#8f929c" />
        <stop offset=".45" stopColor="#c3c7d2" />
        <stop offset=".7" stopColor="#eef2fb" />
        <stop offset="1" stopColor="#fff" />
      </linearGradient>
      <linearGradient id="boss" x1="0.3" y1="0" x2="0" y2="1">
        <stop offset="0" stopColor="#dfe7f8" />
        <stop offset=".5" stopColor="#fafcff" />
        <stop offset="1" stopColor="#dbe2f3" />
      </linearGradient>
      <pattern id="mesh" width="6" height="6" patternUnits="userSpaceOnUse">
        <path d="M0 0h3v3h-3zM3 3h3v3h-3z" fill="#c3cbe2" />
      </pattern>
      <pattern id="speck" width="12" height="12" patternUnits="userSpaceOnUse">
        <path d="M0 0h3v3h-3zM6 3h3v3h-3zM3 6h3v3h-3zM9 9h3v3h-3z" fill="#24262c" />
      </pattern>
      <clipPath id="boreClip"><ellipse cx="268" cy="319" rx="59" ry="113" /></clipPath>
    </defs>
    <path d={gridDots} fill="#d8d8d8" shapeRendering="crispEdges" />
    <g stroke="#f4f4f4" fill="none">
      <path d="M256.500 338 L255.500 280 M251.500 287 L255.500 280 L259.500 287 M257 338 L311 326 M302 324 L311 326 L304 332 M257 338 L289 355 M280 355 L289 355 L284 348" />
      <ellipse cx="257" cy="339" rx="5" ry="2" />
    </g>
    <g fill="#fff" fontFamily='Lato, "Liberation Sans", sans-serif' fontWeight="300" fontSize="17">
      <text x="249" y="277">Z</text>
      <text x="312" y="332">Y</text>
      <text x="288" y="364">X</text>
    </g>
    <g transform="translate(385 128) scale(.33333)">
      <path d="M37 590 L240 541 L520 560 V715 L215 790 L37 672Z" fill="#f3f8ff" />
      <path d="M220 712 L520 635 V712 L220 786Z" fill="#aaaebb" />
      <path d="M37 590 L52 588 L222 698 L222 716 L37 610Z" fill="url(#mesh)" />
      <path d="M204 553 L243 543 L375 622 L350 648Z" fill="url(#mesh)" />
      <path d="M222 700 L520 620 V640 L222 716Z" fill="url(#mesh)" />
      <path d="M355 612 L420 590 V640 L375 625Z" fill="#dfe6f6" />
      <ellipse cx="190" cy="627" rx="40" ry="20" fill="url(#mesh)" stroke="#d0d6e4" strokeWidth="2" />
      <path d="M152 612 v14 M158 612 v16 M163 618 v14 M150 628 h10 M172 620 v16" stroke="#757986" strokeWidth="3" />
      <path d="M240 460 V546 L355 612 V470Z" fill="#f3f8ff" />
      <path d="M355 470 L440 440 V600 L355 610Z" fill="#a7abb8" />
      <path d="M268 140 L340 110 L480 150 C520 190 543 250 543 320 C543 400 520 450 460 468 L300 497Z" fill="url(#band)" />
      <path d="M330 488 L365 385 L410 400 L470 450 L440 464 L395 462Z" fill="url(#speck)" />
      <path d="M360 335 L543 305 M362 360 L540 325 L365 310 M365 390 L540 345 M362 350 L500 330 L538 400 M365 370 L525 425 L370 400 M372 405 L520 372 M380 420 L500 450 L375 380 M440 225 L535 290 M355 270 L470 235" stroke="#e9efff" strokeWidth="2" fill="none" />
      <path d="M363 335 L440 345 L543 328 L480 350 L538 375 L440 358 L363 385 L410 352Z" fill="#e4ebfa" />
      <path d="M268 140 C300 150 335 180 345 225 L450 222 L372 150 L300 135Z" fill="#f1f5ff" />
      <ellipse cx="268" cy="318" rx="94" ry="179" fill="#f4f9ff" />
      <ellipse cx="268" cy="319" rx="59" ry="113" fill="url(#bore)" />
      <g clipPath="url(#boreClip)" stroke="#f2f6ff" strokeWidth="2" fill="none">
        <path d="M200 220 L320 205 M200 240 L330 225 M200 262 L330 240 M205 285 L330 255 M205 300 L330 265 M205 290 L290 275 L330 320 M200 330 L260 265 M205 268 L330 285" />
        <path d="M230 215 L300 208 M212 235 L310 218 M215 250 L318 232" stroke="#4d5059" strokeWidth="2" />
      </g>
      <path d="M290 36 L440 90 C475 100 485 130 480 160 L474 200 L382 214 L345 190 L300 140 C255 150 225 130 229 92 C232 55 260 35 290 36Z" fill="url(#boss)" />
      <path d="M275 42 L400 90 M262 48 L395 97 M300 70 L390 110 M245 65 L290 80 M310 95 L380 120 M310 120 L375 140 M330 140 L372 165 M236 85 L285 100" stroke="#d3dbee" strokeWidth="2" />
      <path d="M372 160 C368 115 395 92 427 92 C460 93 484 118 480 156 L474 199 L382 214Z" fill="#a4a8b5" />
      <ellipse cx="425" cy="157" rx="27" ry="31" fill="#edf2fc" />
      <ellipse cx="427" cy="160" rx="18" ry="22" fill="url(#mesh)" />
      <path d="M358 65 C318 72 305 95 299 120 C296 138 285 142 263 143" stroke="#8f94a3" strokeWidth="4" fill="none" />
      <path d="M263 143 V208" stroke="#4a4d57" strokeWidth="4" />
    </g>
  </svg>
);

/* ---------- property data ---------- */
const solidLine = "ByLayer\u00a0\u00a0\u00a0Solid line";

const lines = (rows: [number, number, string][]) => rows.map(([y, w, dash], i) => <path key={i} d={`M1 ${y} H17`} stroke="#111" strokeWidth={w} strokeDasharray={dash || undefined} />);

const GeneralGroup = () => (
  <Group>
    <GroupName>General</GroupName>
    <PropRow>
      <Icon s={18} v={18}><circle cx="8.500" cy="8.500" r="7.500" fill="#2860b0" stroke="#1d4278" /><path d="M4 4 C8 1 13 3 14 8 L9 10 L7 7Z" fill="#55b45a" /><path d="M6 14 h5 M11 14 h6" stroke="#fff" strokeWidth="4" /><rect x="6.500" y="12.500" width="5" height="3" rx="1.500" stroke="#222" /><rect x="11.500" y="12.500" width="5" height="3" rx="1.500" stroke="#222" /></Icon>
      <PropInput aria-label="Hyperlink" defaultValue="" />
    </PropRow>
    <PropRow><Icon s={18}><Layers /></Icon><Combo name="Layer" value="0" /></PropRow>
    <PropRow>
      <Icon s={18} v={18}><path d="M2 4 L8 1 L12 7 L5 11Z" fill="#d7dce4" stroke="#444" /><path d="M2 15 C4 11 8 15 10 12 L15 9 C16 14 13 17 9 17 C6 17 4 15 2 15Z" fill="#3c6fc4" stroke="#2c56a0" /><path d="M17 2 L13 12" stroke="#d19232" strokeWidth="2.500" /></Icon>
      <Combo name="Line color" value="ByLayer" lead={<LayerRing />} />
    </PropRow>
    <PropRow><Icon s={18} v={18}>{lines([[3, 2, "5 1"], [7.5, 2, "3 1"], [11.5, 2, "4 1"], [15.5, 2, "2 1"]])}</Icon><PropInput aria-label="Line scale" defaultValue="1" /></PropRow>
    <PropRow><Icon s={18} v={18}>{lines([[3, 3, ""], [7, 1.5, "3 1"], [10, 1.5, "1 1"], [13, 1.5, "3 2"], [16, 1.5, "1 2"]])}</Icon><Combo name="Line style" value={solidLine} /></PropRow>
    <PropRow><Icon s={18} v={18}>{lines([[3, 4, ""], [8, 3, ""], [12.5, 2, ""], [16.5, 1.5, ""]])}</Icon><Combo name="Line weight" value="ByLayer" lead={<Stroke />} /></PropRow>
  </Group>
);

const PrintStyleGroup = () => (
  <Group>
    <GroupName>PrintStyle</GroupName>
    <PropRow><Icon s={18} v={18}><rect x="1.500" y="2.500" width="12" height="14" fill="#f7f7f7" stroke="#888" /><path d="M3 8 H11" stroke="#111" strokeWidth="2" strokeDasharray="3 1" /><path d="M16 2 L8 12" stroke="#c58a2c" strokeWidth="2.500" /><path d="M9 11 L5 16" stroke="#333" strokeWidth="2" /></Icon><Combo name="Print style" value="None" /></PropRow>
    <PropRow><Icon s={18} v={18}><rect x="1" y="1" width="4.500" height="16" fill="#dd5a4a" /><rect x="6" y="1" width="5" height="16" fill="#45b06c" /><rect x="11.500" y="1" width="5.500" height="16" fill="#5c92da" /><path d="M12 7 L17 2 M12 12 L17 7 M12 17 L17 12" stroke="#fff" /></Icon><Combo name="Print color" value="ByColor" off /></PropRow>
    <PropRow><Icon s={18} v={18}><rect x="1" y="1" width="4" height="12" fill="#dd5a4a" /><rect x="6" y="1" width="4" height="8" fill="#45b06c" /><path d="M11 7 L16 1" stroke="#5c92da" strokeWidth="2" /><path d="M2 17 L17 4 V17Z" fill="#111" /><path d="M9 9 H17 M6 13 H17" stroke="#ddd" /></Icon><PropInput $blue readOnly aria-label="Print table" defaultValue="None" /></PropRow>
  </Group>
);

const ViewGroup = () => (
  <Group>
    <GroupName>View</GroupName>
    {[["X", "70.4248"], ["Y", "78.6031"], ["Z", "0"]].map(([axis, value]) => (
      <PropRow key={axis}><AxisMark t={axis} /><PropInput $blue readOnly aria-label={`Center ${axis}`} defaultValue={value} /></PropRow>
    ))}
    <PropRow><Icon s={18} v={18}><path d="M3 1.500 H16 M3 16.500 H16" stroke="#111" strokeWidth="1.400" /><path d="M9.500 5 V13" stroke="#4a6fd8" /><path d="M9.500 2.500 L12 6.500 H7Z M9.500 15.500 L12 11.500 H7Z" fill="#4a6fd8" /></Icon><PropInput $blue readOnly aria-label="Height" defaultValue="245.3248" /></PropRow>
    <PropRow><Icon s={18} v={18}><path d="M1.500 3 V15 M16.500 3 V15" stroke="#111" strokeWidth="1.400" /><path d="M5 9 H13" stroke="#4a6fd8" strokeDasharray="3 2" /><path d="M2.500 9 L6.500 6.500 V11.500Z M15.500 9 L11.500 6.500 V11.500Z" fill="#4a6fd8" /></Icon><PropInput $blue readOnly aria-label="Width" defaultValue="415.4599" /></PropRow>
  </Group>
);

const MiscGroup = () => (
  <Group>
    <GroupName>Misc</GroupName>
    <PropRow><Ucs framed /><Combo name="CCS icon on" value="Yes" /></PropRow>
    <PropRow><Ucs /><Combo name="CCS icon at origin" value="Yes" /></PropRow>
    <PropRow><Ucs framed /><Combo name="CCS per viewport" value="" /></PropRow>
  </Group>
);

const menus = ["File", "Edit", "View", "Insert", "Format", "Dimension", "Draw", "Modify", "Tools", "Solids", "Window", "Help"];

type Entry = null | { label: string; keys?: string; art?: React.ReactNode; off?: boolean; short?: boolean };
const context: Entry[] = [
  { label: "Repeat PROPERTIES", short: true },
  null,
  { label: "Cut", keys: "Ctrl+X", art: <Scissors /> },
  { label: "Copy", keys: "Ctrl+C", art: <CopyArt /> },
  { label: "Copy with Reference Point", keys: "Ctrl+Shift+C", art: <><CopyArt /><circle cx="5" cy="22" r="3" fill="#e3d23c" stroke="#4d4510" /></> },
  { label: "Paste", keys: "Ctrl+V", art: <PasteArt /> },
  { label: "Paste as Block", keys: "Ctrl+Shift+V", short: true },
  null,
  { label: "Undo", keys: "Ctrl+Z", art: <UndoArt /> },
  { label: "Redo", keys: "Ctrl+Y", art: <RedoArt />, off: true },
  { label: "Pan", art: <PanArt /> },
  { label: "Zoom", art: <ZoomArt /> },
  null,
  { label: "Options...", short: true },
  { label: "Drafting Options...", short: true },
];

const toggles: [string, number, boolean][][] = [
  [["Snap", 37, false], ["Grid", 33, true], ["Ortho", 42, false]],
  [["Polar", 37, true], ["ESnap", 43, true], ["ETrack", 45, true], ["LWT", 35, false], ["MODEL", 51, true]],
];

export default function App() {
  return (
    <Shell>
      <Global />
      <TitleBar>
        <Logo />
        <WindowTitle>CorelCAD™ - [...\ara_yatak.dwg*- Read Only]</WindowTitle>
        <WindowButtons>
          <WindowButton aria-label="Minimize"><Icon s={10} v={10}><rect x="1" y="5" width="8" height="3" fill="#fff" stroke="#444" strokeWidth=".6" /></Icon></WindowButton>
          <WindowButton aria-label="Restore"><Icon s={12} v={12}><path d="M4 3 V1.500 H10.500 V8.500 H9" stroke="#fff" strokeWidth="1.500" /><rect x="2" y="3.500" width="6.500" height="7" stroke="#fff" strokeWidth="2" /></Icon></WindowButton>
          <WindowButton $close aria-label="Close"><Icon s={12} v={12}><path d="M2 2 L10 10 M10 2 L2 10" stroke="#fff" strokeWidth="3" /></Icon></WindowButton>
        </WindowButtons>
      </TitleBar>
      <MenuBar>
        <Logo />
        {menus.map((m) => <MenuLink key={m} href="#">{m}</MenuLink>)}
        <MdiButtons>
          <MdiButton aria-label="Minimize drawing"><Icon s={9} v={9}><path d="M2 7 H7" stroke="#5d7488" strokeWidth="2" /></Icon></MdiButton>
          <MdiButton aria-label="Restore drawing"><RestoreGlyph c="#5d7488" /></MdiButton>
          <MdiButton aria-label="Close drawing"><CloseGlyph c="#5d7488" /></MdiButton>
        </MdiButtons>
      </MenuBar>
      <Toolbar>
        <Grip />
        {standard.map((t, i) => (t ? <ToolButton key={i} title={t[0]}><Icon s={25}>{t[1]}</Icon></ToolButton> : <Rule key={i} />))}
      </Toolbar>
      <Toolbar>
        <LayerSide>
          <Grip />
          <ToolButton title="Layers Manager"><Icon><g transform="translate(0 5)"><Layers /></g><g transform="translate(4 0) scale(.85)"><Hand /></g></Icon></ToolButton>
          <Combo
            name="Active layer"
            value="0"
            width={300}
            lead={
              <>
                <Icon s={16} v={16}><circle cx="9" cy="8" r="4.300" fill="#1fb81f" stroke="#0b7a0b" /><circle cx="8" cy="6.500" r="1.400" fill="#a9f2a0" /></Icon>
                <Icon s={16} v={16}><path d="M2 9 C2 6 6 8 9 6 C13 4 16 7 13 9 C10 12 2 12 2 9Z" fill="#c9e0f6" stroke="#4f86bb" /></Icon>
                <Icon s={16} v={16}><path d="M2 7 V4 C2 1 7 1 7 4 V7" stroke="#777" strokeWidth="1.600" /><rect x="5" y="6.500" width="9" height="7.500" fill="#d8b23a" stroke="#7d6212" /></Icon>
                <Icon s={16} v={16}><circle cx="8" cy="8" r="6" fill="#e4edfa" stroke="#333" strokeWidth="1.300" /></Icon>
              </>
            }
          />
        </LayerSide>
        <Grip />
        <Combo name="Color" value="ByLayer" width={117} lead={<LayerRing />} />
        <Rule />
        <Combo name="Line style" value={solidLine} width={117} />
        <Rule />
        <Combo name="Line weight" value="ByLayer" width={117} lead={<Stroke />} />
        <Rule />
        <Combo name="Print style" value="ByColor" width={117} off tint="#e9edf2" />
      </Toolbar>
      <Work>
        <Palette>
          <Grip $across />
          {modify.map(([n, art]) => <PaletteButton key={n} title={n}><Icon>{art}</Icon></PaletteButton>)}
        </Palette>
        <Palette>
          <Grip $across />
          {snaps.map((t, i) => (t ? <PaletteButton key={i} title={t[0]}><Icon>{t[1]}</Icon></PaletteButton> : <PaletteRule key={i} />))}
        </Palette>
        <Palette>
          <Grip $across />
          {draw.map(([n, art]) => <PaletteButton key={n} title={n}><Icon>{art}</Icon></PaletteButton>)}
        </Palette>
        <Desk>
          <DeskTop>
            <Drawing>
              <Canvas><ModelView /></Canvas>
              <ScrollTrack>
                <Arrow $to="up" />
                <TrackEnd><Thumb $w={13} $h={13} /><Arrow $to="down" /></TrackEnd>
              </ScrollTrack>
              <SheetBar>
                <SheetTab $width={50} $on>Model</SheetTab>
                <SheetTab $width={63}>Layout1</SheetTab>
                <SheetTab $width={62}>Layout2</SheetTab>
                <SheetScroll><Thumb $w={12} $h={12} /><Arrow $to="right" /></SheetScroll>
              </SheetBar>
            </Drawing>
            <Properties>
              <PanelHead>
                <PanelTitle>Properties</PanelTitle>
                <PanelButton aria-label="Float"><RestoreGlyph /></PanelButton>
                <PanelButton aria-label="Close"><CloseGlyph /></PanelButton>
              </PanelHead>
              <SelectionRow>
                <Combo name="Selection" value="No Selection" />
                <SelectionButton aria-label="Select matching"><Icon s={16} v={16}><path d="M1 2 H4 V12 H1Z M5 2 L10 7 V12 H5Z" fill="#ccc" stroke="#777" /><path d="M8 4 V14 L10.500 12 L12 15.500 L13.500 15 L12 11.500 H15Z" fill="#fff" stroke="#444" /></Icon></SelectionButton>
                <SelectionButton aria-label="Select entities"><Icon s={16} v={16}><rect x="1.500" y="1.500" width="9" height="7" fill="#ddd" stroke="#444" strokeWidth="1.500" /><path d="M3 11 H9" stroke="#555" strokeWidth="2" /><path d="M8 4 V14 L10.500 12 L12 15.500 L13.500 15 L12 11.500 H15Z" fill="#fff" stroke="#333" /></Icon></SelectionButton>
                <SelectionButton aria-label="Smart select"><Icon s={16} v={16}><rect x="1.500" y="1.500" width="8" height="6" fill="#ddd" stroke="#555" strokeWidth="1.500" /><path d="M3 10 H8" stroke="#555" strokeWidth="2" /><path d="M12 3 L6 9 H9 L7 15 L14 8 H11Z" fill="#f2c230" stroke="#8e6d10" strokeWidth=".6" /></Icon></SelectionButton>
              </SelectionRow>
              <PropsFrame>
                <PropsList>
                  <GeneralGroup />
                  <PrintStyleGroup />
                  <ViewGroup />
                  <MiscGroup />
                </PropsList>
                <PropsTrack>
                  <Arrow $to="up" />
                  <LongThumb><ThumbGrip /></LongThumb>
                  <Arrow $to="down" />
                </PropsTrack>
              </PropsFrame>
            </Properties>
          </DeskTop>
          <CommandPanel>
            <PanelHead>
              <PanelTitle>Command window</PanelTitle>
              <PanelButton aria-label="Float"><RestoreGlyph /></PanelButton>
              <PanelButton aria-label="Close"><CloseGlyph /></PanelButton>
            </PanelHead>
            <History>
              <HistoryText>
                <div>Specify opposite corner:</div>
                <div>: «Cancel»</div>
                <div>: &lt;Snap On&gt;</div>
                <div>: &lt;Snap Off&gt;</div>
              </HistoryText>
              <HistoryTrack>
                <Arrow $to="up" />
                <TrackEnd><Thumb $w={15} $h={7} /><Arrow $to="down" /></TrackEnd>
              </HistoryTrack>
            </History>
            <CommandInput aria-label="Command" defaultValue=":" />
          </CommandPanel>
        </Desk>
      </Work>
      <StatusBar>
        {toggles.map((group, i) => (
          <StatusGroup key={i}>
            {group.map(([n, w, on]) => <StatusToggle key={n} $width={w} $on={on} aria-pressed={on}>{n}</StatusToggle>)}
          </StatusGroup>
        ))}
        <Coordinates>(5.8683,150.7507,0)</Coordinates>
      </StatusBar>
      <ContextMenu>
        {context.map((e, i) =>
          e ? (
            <li key={i}>
              <ContextItem $off={e.off} $short={e.short} disabled={e.off}>
                <span>{e.art && <Icon s={17}>{e.art}</Icon>}</span>
                <span>{e.label}</span>
                <span>{e.keys}</span>
              </ContextItem>
            </li>
          ) : (
            <ContextRule key={i} />
          )
        )}
      </ContextMenu>
    </Shell>
  );
}
